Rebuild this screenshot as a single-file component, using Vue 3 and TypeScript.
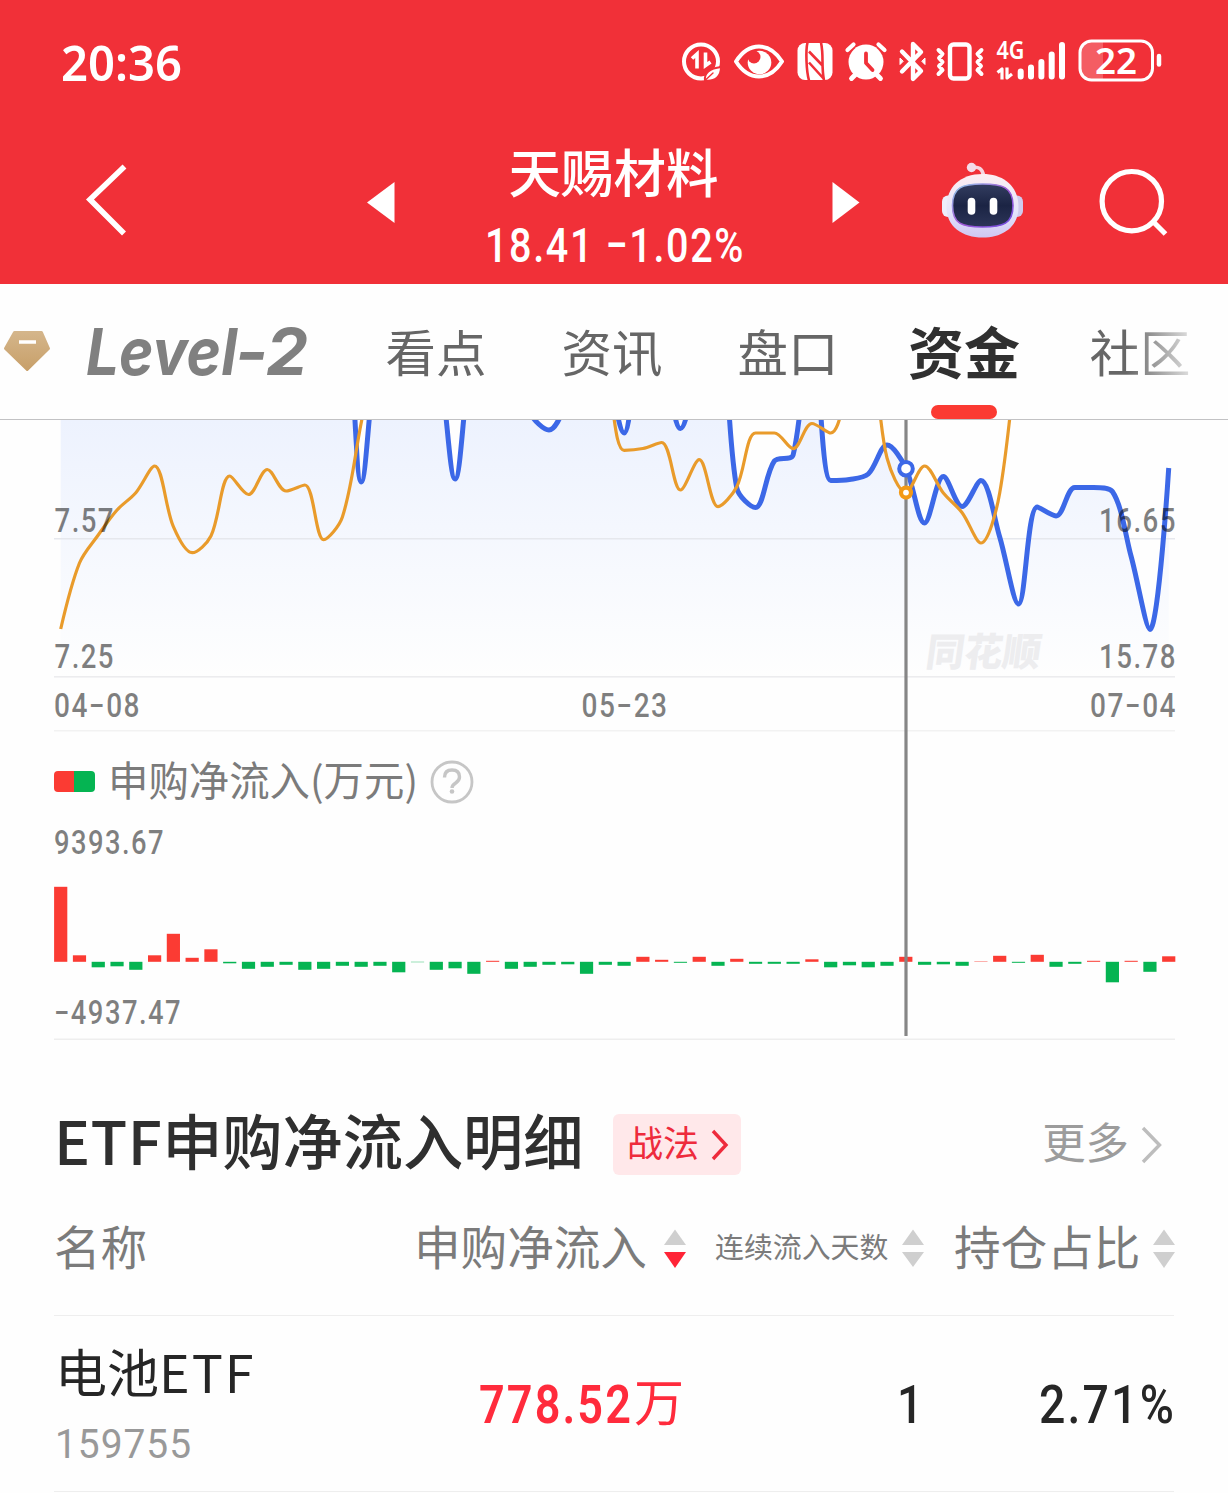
<script setup lang="ts">
import { h } from 'vue'

interface FitProps {
  text: string
  w: number
  size: number
  weight?: number
  family?: string
  track?: number
}

// Single-line text squeezed to an exact advance width, as the condensed numerals need.
const FitText = (p: FitProps) =>
  h('svg', { width: p.w, height: p.size, viewBox: `0 0 ${p.w} ${p.size}`, style: 'display:block;overflow:visible;flex:none' }, [
    h(
      'text',
      {
        x: 0,
        y: p.size * 0.86,
        'font-size': p.size,
        'font-weight': p.weight ?? 500,
        'font-family': p.family ?? 'Roboto, sans-serif',
        'letter-spacing': p.track ?? 0,
        textLength: p.w,
        lengthAdjust: 'spacingAndGlyphs',
        fill: 'currentColor',
      },
      p.text,
    ),
  ])
FitText.props = ['text', 'w', 'size', 'weight', 'family', 'track']

const X0 = 60.7
const STEP = 18.78
type Pt = [number, number]

const clamp = (v: number, a: number, b: number) => Math.max(Math.min(a, b), Math.min(Math.max(a, b), v))

function smoothPath(pts: Pt[], s = 0.33): string {
  const n = pts.length
  const before: Pt[] = []
  const after: Pt[] = []
  for (let i = 0; i < n; i++) {
    const p = pts[i]
    if (i === 0 || i === n - 1) {
      before.push(p)
      after.push(p)
      continue
    }
    const a = pts[i - 1]
    const b = pts[i + 1]
    const d0 = Math.hypot(p[0] - a[0], p[1] - a[1])
    const d1 = Math.hypot(b[0] - p[0], b[1] - p[1])
    const r = d1 / (d0 + d1)
    const vx = b[0] - a[0]
    const vy = b[1] - a[1]
    let nx = clamp(p[0] + vx * s * r, p[0], b[0])
    let ny = clamp(p[1] + vy * s * r, p[1], b[1])
    const bx = clamp(p[0] - ((nx - p[0]) * d0) / d1, a[0], p[0])
    const by = clamp(p[1] - ((ny - p[1]) * d0) / d1, a[1], p[1])
    nx = p[0] + ((p[0] - bx) * d1) / d0
    ny = p[1] + ((p[1] - by) * d1) / d0
    before.push([bx, by])
    after.push([nx, ny])
  }
  let d = `M${pts[0][0]} ${pts[0][1]}`
  for (let i = 1; i < n; i++) {
    d += `C${after[i - 1].join(' ')} ${before[i].join(' ')} ${pts[i].join(' ')}`
  }
  return d
}

const toPts = (ys: number[]): Pt[] => ys.map((y, i) => [+(X0 + i * STEP).toFixed(2), y])

const orangeYs = [
  629, 563, 535, 510, 492.7, 466, 526.7, 552.7, 536, 476, 494.5, 469.5, 491, 485, 539.6, 517, 423, 330, 300, 290, 280, 290,
  300, 310, 290, 300, 310, 320, 340, 370, 450.3, 448.5, 442.5, 490, 459.7, 506.7, 486.7, 433, 433, 448.7, 423.5, 433, 385, 350,
  458, 492.5, 466, 493, 512.7, 543, 493, 330,
]
const blueYs = [
  300, 290, 300, 280, 300, 320, 300, 290, 300, 310, 300, 300, 300, 310, 300, 300, 482, 335, 320, 330, 350, 479, 345, 330, 350,
  413, 430, 400, 350, 370, 433, 345, 365, 428.5, 360, 310, 488, 507.5, 461, 455, 310, 480.5, 479.5, 474, 445, 468, 523, 476.5,
  506.5, 480.5, 537, 604, 507, 516, 487.5, 487.5, 491.5, 556.5, 629.5, 468,
]
const orangePath = smoothPath(toPts(orangeYs))
const bluePath = smoothPath(toPts(blueYs))
const areaPath = `${bluePath}L1168.7 677L60.7 677Z`

const bars = [
  75, 6.5, -5.5, -4.5, -8, 6.5, 28, 4, 12.5, -1.5, -7, -5, -3, -8, -7, -4, -5, -4, -10.5, -0.4, -8, -6.5, -12, 1, -7, -5, -3,
  -2.5, -12, -3, -4, 5, 2, -1, 5, -4, 3, -2, -2, -2, 2.5, -5.5, -3.5, -5.5, -4, 5, -3, -2.5, -4, 0.4, 6, -1, 7, -5, -2, 1,
  -20.5, 1, -10, 5.5,
]

const tabs = ['看点', '资讯', '盘口']
</script>

<template>
  <div class="page">
    <header class="top">
      <div class="status">
        <FitText class="time" text="20:36" :w="121" :size="49" :weight="600" family="'Noto Sans', sans-serif" />
        <svg class="icons" width="486" height="60" viewBox="680 28 486 60" fill="none" stroke="#fff" stroke-linecap="round" stroke-linejoin="round">
          <!-- data saver -->
          <circle cx="701" cy="61.500" r="17" stroke-width="4" />
          <path d="M692 58.500l5-4.500V68.500M705.500 52.500V65.500l5-3.500" stroke-width="3.600" stroke-linejoin="miter" stroke-linecap="butt" />
          <path d="M705 80.500c-1-7.500 4.500-12 16-13.500 0 9.500-5.500 14.500-16 13.500z" fill="#fff" stroke="#f13038" stroke-width="2" />
          <path d="M706 79.500l7-6.500" stroke="#f13038" stroke-width="1.400" />
          <!-- eye -->
          <path d="M736 61.500c6-9.500 14-15 23-15s17 5.500 23 15c-6 9.500-14 15-23 15s-17-5.500-23-15z" stroke-width="4" />
          <circle cx="759.500" cy="62.500" r="11.800" fill="#fff" stroke="none" />
          <circle cx="754" cy="57" r="6.500" fill="#f13038" stroke="none" />
          <!-- nfc -->
          <rect x="797.500" y="43" width="35" height="37" rx="7.500" fill="#fff" stroke="none" />
          <path d="M807.500 42.500q-1.500 6-1 18.500t2.500 19.500M821 42.500q1.500 7 1.500 18.500t1.500 19.500M809 51.500l13.500 14M809 62.500l14.500 16" stroke="#f13038" stroke-width="2.600" stroke-linecap="butt" />
          <!-- alarm -->
          <circle cx="866" cy="62" r="17.500" fill="#fff" stroke="none" />
          <path d="M847.500 50l6-5.500M884.500 50l-6-5.500" stroke-width="4.200" />
          <path d="M855 75l-3.500 3.500M877 75l3.500 3.500" stroke-width="4.800" />
          <path d="M866 53.500v9.500l6.500 7" stroke="#f13038" stroke-width="3.800" />
          <!-- bluetooth -->
          <path d="M902 51.500l19 19.500-8 8V44l8 8-19 19.500" stroke-width="4.400" />
          <path d="M900 58.500v6l3-3zM925 58.500v6l-3-3z" fill="#fff" stroke-width="1" />
          <!-- vibrate -->
          <rect x="950" y="44.500" width="19.500" height="34" rx="3.500" stroke-width="4.400" />
          <path d="M938.500 50l4 4-3.500 4 3.500 4-3.500 4 3.500 4-4 4M981.500 50l-4 4 3.500 4-3.500 4 3.500 4-3.500 4 4 4" stroke-width="4" />
          <!-- signal -->
          <text x="996.500" y="59.300" font-family="'Noto Sans', sans-serif" font-weight="600" font-size="24.500" textLength="28" lengthAdjust="spacingAndGlyphs" fill="#fff" stroke="none">4G</text>
          <path d="M997.500 72.500l4.500-3.500v10.500M1007 67.500v10.500l5-4" stroke-width="3.200" stroke-linecap="butt" />
          <path d="M1020.700 71.500v5M1031 67.500v9M1041.400 62v14.500M1051.700 54.500v22M1062 45v31.500" stroke-width="6" />
          <!-- battery -->
          <path d="M1103 41.500v38h-12q-10.500 0-10.500-10.500v-17q0-10.500 10.500-10.500z" fill="#fff" fill-opacity="0.220" stroke="none" />
          <rect x="1080" y="41" width="72.500" height="39" rx="11.500" stroke-width="3" />
          <text x="1095" y="74" font-family="'Noto Sans', sans-serif" font-weight="600" font-size="36" textLength="42" lengthAdjust="spacingAndGlyphs" fill="#fff" stroke="none">22</text>
          <path d="M1159 56v8.500" stroke-width="4.500" />
        </svg>
      </div>
      <nav class="nav">
        <svg class="back" width="44" height="74" viewBox="0 0 44 74"><path d="M40.500 3.500L6 36.500l34 34" fill="none" stroke="#fff" stroke-width="5.600" /></svg>
        <svg class="prev" width="28" height="42" viewBox="0 0 28 42"><path d="M0 20.500L27.500 0v41z" fill="#fff" /></svg>
        <div class="stock">
          <div class="name">天赐材料</div>
          <FitText text="18.41 −1.02%" :w="260" :size="48.5" :weight="500" :track="2" />
        </div>
        <svg class="next" width="28" height="42" viewBox="0 0 28 42"><path d="M27.500 20.500L0.500 0v41z" fill="#fff" /></svg>
        <svg class="robot" width="84" height="78" viewBox="941 161 84 78">
          <defs>
            <linearGradient id="head" x1="0" y1="0" x2="0" y2="1">
              <stop offset="0" stop-color="#fdeef2" />
              <stop offset="0.600" stop-color="#e4e4fb" />
              <stop offset="1" stop-color="#cfc6f2" />
            </linearGradient>
            <linearGradient id="rim" x1="0" y1="0" x2="1" y2="1">
              <stop offset="0" stop-color="#8fd0ea" />
              <stop offset="0.500" stop-color="#a45ad6" />
              <stop offset="1" stop-color="#6d4be0" />
            </linearGradient>
            <linearGradient id="visor" x1="0" y1="0" x2="0" y2="1">
              <stop offset="0" stop-color="#333d60" />
              <stop offset="0.500" stop-color="#1b2444" />
              <stop offset="1" stop-color="#2c3558" />
            </linearGradient>
          </defs>
          <path d="M972 167.500q10-2 11.500 8" fill="none" stroke="#f7d5e0" stroke-width="3.500" />
          <circle cx="971.500" cy="167.500" r="4.700" fill="#f4dcea" />
          <rect x="942" y="195.500" width="14" height="21.500" rx="6" fill="#eeedfb" />
          <rect x="1009" y="195.500" width="14" height="21.500" rx="6" fill="#cfcbee" />
          <path d="M982.500 174c22 0 36 13 36 33s-16 30.500-36 30.500-36-10.500-36-30.500 14-33 36-33z" fill="url(#head)" />
          <path d="M982.500 184c20 0 30.500 3 30.500 21.500s-10 21.500-30.500 21.500-30-3-30-21.500 10-21.500 30-21.500z" fill="url(#visor)" stroke="url(#rim)" stroke-width="1.600" />
          <rect x="967.700" y="197.700" width="7.600" height="17" rx="3.800" fill="#fff" />
          <rect x="989.700" y="197.700" width="7.600" height="17" rx="3.800" fill="#fff" />
        </svg>
        <svg class="search" width="72" height="72" viewBox="1098 167 72 72" fill="none" stroke="#fff" stroke-width="5.200">
          <circle cx="1131.800" cy="201.200" r="29.700" />
          <path d="M1153 221.500l12.500 12.500" />
        </svg>
      </nav>
    </header>

    <div class="tabs">
      <svg class="gem" width="56" height="56" viewBox="0 0 56 56">
        <defs><linearGradient id="gold" x1="0" y1="0" x2="0" y2="1"><stop offset="0" stop-color="#d4b58a" /><stop offset="1" stop-color="#c8a06a" /></linearGradient></defs>
        <path d="M14.500 9.500h27l7 16L27.200 46.500 5.500 25.500z" fill="url(#gold)" stroke="url(#gold)" stroke-width="3" stroke-linejoin="round" />
        <path d="M19 19h17" stroke="#fff" stroke-width="3.500" />
      </svg>
      <svg class="level" width="224" height="80" viewBox="0 0 224 80">
        <text y="61" font-size="65">
          <tspan x="2" textLength="151" lengthAdjust="spacingAndGlyphs">Level</tspan><tspan x="151" textLength="33" lengthAdjust="spacingAndGlyphs">-</tspan><tspan x="182" textLength="42" lengthAdjust="spacingAndGlyphs">2</tspan>
        </text>
      </svg>
      <span v-for="t in tabs" :key="t" class="tab">{{ t }}</span>
      <span class="tab active">资金<i class="mark"></i></span>
      <span class="tab fade">社区</span>
    </div>

    <section class="charts">
      <svg class="trend" width="1228" height="312" viewBox="0 420 1228 312">
        <defs>
          <linearGradient id="area" gradientUnits="userSpaceOnUse" x1="0" y1="420" x2="0" y2="677">
            <stop offset="0" stop-color="#edf2fe" />
            <stop offset="1" stop-color="#fefefe" />
          </linearGradient>
        </defs>
        <path :d="areaPath" fill="url(#area)" />
        <g fill="#ececee">
          <rect x="54" y="538" width="1121" height="1.500" fill="#e6e8ed" />
          <rect x="54" y="676" width="1121" height="1.600" />
          <rect x="54" y="730" width="1121" height="1.500" fill="#f2f2f2" />
        </g>
        <text x="1018" y="666" transform="skewX(-8)" font-size="39" class="mark-text" textLength="115" lengthAdjust="spacingAndGlyphs">同花顺</text>
        <path :d="bluePath" fill="none" stroke="#3c68e7" stroke-width="5" />
        <path :d="orangePath" fill="none" stroke="#e99b2b" stroke-width="3.200" />
        <g class="axis">
          <text x="54.500" y="532" textLength="60.500" lengthAdjust="spacingAndGlyphs">7.57</text>
          <text x="54.500" y="668" textLength="60.500" lengthAdjust="spacingAndGlyphs">7.25</text>
          <text x="1099" y="532" textLength="78" lengthAdjust="spacingAndGlyphs">16.65</text>
          <text x="1099" y="668" textLength="78" lengthAdjust="spacingAndGlyphs">15.78</text>
          <text x="54" y="717" textLength="87" lengthAdjust="spacingAndGlyphs">04−08</text>
          <text x="581.500" y="717" textLength="87" lengthAdjust="spacingAndGlyphs">05−23</text>
          <text x="1090" y="717" textLength="87" lengthAdjust="spacingAndGlyphs">07−04</text>
        </g>
      </svg>
      <div class="legend">
        <i class="swatch"></i>
        <span>申购净流入(万元)</span>
        <svg width="44" height="44" viewBox="0 0 44 44" fill="none" stroke="#c6c6c6">
          <circle cx="22" cy="22" r="20" stroke-width="2.800" />
          <path d="M14.500 17.500q0-7.500 7.500-7.500t7.500 7q0 3.500-3.800 6-3.700 2.400-3.700 5" stroke-width="3.400" />
          <circle cx="22" cy="31.500" r="2.300" fill="#c6c6c6" stroke="none" />
        </svg>
      </div>
      <svg class="flow" width="1228" height="215" viewBox="0 825 1228 215">
        <g class="axis">
          <text x="54" y="853.500" textLength="111" lengthAdjust="spacingAndGlyphs">9393.67</text>
          <text x="54" y="1023.500" textLength="128" lengthAdjust="spacingAndGlyphs">−4937.47</text>
        </g>
        <rect
          v-for="(b, i) in bars"
          :key="i"
          :x="X0 + i * STEP - 6.6"
          :y="b > 0 ? 961.8 - b : 961.8"
          width="13.2"
          :height="Math.abs(b)"
          :fill="b > 0 ? '#fb3b33' : '#05b452'"
        />
        <rect x="54" y="1038.500" width="1121" height="1.500" fill="#eeeeee" />
      </svg>
      <svg class="cursor" width="20" height="616" viewBox="896 420 20 616">
        <path d="M906 420v616" stroke="#868686" stroke-width="3.200" />
        <circle cx="906" cy="468.700" r="6.800" fill="#fff" stroke="#3c68e7" stroke-width="4" />
        <circle cx="906" cy="492.600" r="5" fill="#fff" stroke="#f39a16" stroke-width="4.200" />
      </svg>
    </section>

    <section class="detail">
      <div class="head">
        <h2><span class="etf">ETF</span>申购净流入明细</h2>
        <span class="badge"><b>战法</b><svg width="18" height="32" viewBox="0 0 18 32"><path d="M2 2l13 14L2 30" fill="none" stroke="#ee2b3c" stroke-width="3.400" /></svg></span>
        <span class="more"><b>更多</b><svg width="22" height="38" viewBox="0 0 22 38"><path d="M2 2l16.500 17L2 36" fill="none" stroke="#bdbdbd" stroke-width="3.400" /></svg></span>
      </div>
      <div class="cols">
        <span class="c-name">名称</span>
        <span class="c-flow">申购净流入</span>
        <svg class="sort" width="22" height="40" viewBox="0 0 22 40"><path d="M11 0.500L22 16H0z" fill="#cfcfcf" /><path d="M11 39L0 23h22z" fill="#ff2436" /></svg>
        <span class="c-days">连续流入天数</span>
        <svg class="sort" width="22" height="40" viewBox="0 0 22 40"><path d="M11 0.500L22 16H0zM11 38L0 23h22z" fill="#cfcfcf" /></svg>
        <span class="c-share">持仓占比</span>
        <svg class="sort" width="22" height="40" viewBox="0 0 22 40"><path d="M11 0.500L22 16H0zM11 39L0 23h22z" fill="#cfcfcf" /></svg>
      </div>
      <div class="row">
        <div class="fund">
          <div class="fund-name">电池<span class="etf">ETF</span></div>
          <FitText class="code" text="159755" :w="137" :size="41" :weight="400" :track="1" />
        </div>
        <div class="amount"><FitText text="778.52" :w="154" :size="54" :weight="600" :track="2.5" /><span>万</span></div>
        <FitText class="days" text="1" :w="26" :size="54" :weight="500" />
        <FitText class="share" text="2.71%" :w="137" :size="54" :weight="500" :track="2.5" />
      </div>
    </section>
  </div>
</template>

<style>
body {
  margin: 0;
  background: #fff;
}
</style>

<style scoped>
.page {
  width: 1228px;
  height: 1493px;
  overflow: hidden;
  background: #fefefe;
  font-family: 'Noto Sans CJK SC', sans-serif;
}
.top {
  height: 284px;
  background: #f13038;
  color: #fff;
}
.status {
  height: 125px;
  display: flex;
  align-items: flex-start;
}
.time {
  margin: 38.5px 0 0 61px;
}
.icons {
  margin: 28px 0 0 498px;
}
.nav {
  height: 159px;
  display: flex;
  align-items: flex-start;
}
.nav > * {
  flex: none;
}
.back {
  margin: 38px 0 0 84px;
}
.prev {
  margin: 57px 0 0 239px;
}
.stock {
  width: 437px;
  display: flex;
  flex-direction: column;
  align-items: center;
}
.name {
  height: 95px;
  line-height: 90px;
  font-size: 52.5px;
  font-weight: 500;
}
.stock > svg {
  margin-left: 3px;
}
.next {
  margin: 57px 0 0 0;
}
.robot {
  margin: 36px 0 0 81px;
}
.search {
  margin: 42px 0 0 73px;
}
.tabs {
  height: 135px;
  display: flex;
  align-items: flex-start;
  border-bottom: 1px solid #c2c2c4;
  background: #fefefe;
}
.gem {
  margin: 39px 0 0 0;
  flex: none;
}
.level {
  margin: 30px 50px 0 28px;
  flex: none;
  overflow: visible;
}
.level text {
  font-family: Inter, 'DejaVu Sans', sans-serif;
  font-weight: 700;
  font-style: italic;
  fill: #808080;
}
.tab {
  width: 176px;
  flex: none;
  text-align: center;
  font-size: 50.5px;
  line-height: 132px;
  height: 135px;
  color: #666;
}
.level + .tab {
  margin-left: -10px;
}
.active {
  position: relative;
  font-size: 56px;
  font-weight: 700;
  color: #303030;
}
.mark {
  position: absolute;
  left: 55px;
  bottom: 0;
  width: 66px;
  height: 14px;
  border-radius: 7px;
  background: #fb3a32;
}
.fade {
  color: transparent;
  background: linear-gradient(90deg, #666 42%, #999 58%, #dcdcdc 78%);
  background-clip: text;
  -webkit-background-clip: text;
}
.charts {
  position: relative;
  height: 620px;
}
.charts > svg {
  display: block;
}
.axis {
  font-family: Roboto, sans-serif;
  font-size: 32.5px;
  font-weight: 500;
  letter-spacing: 1.7px;
  fill: #000;
  fill-opacity: 0.51;
}
.mark-text {
  font-family: 'Noto Sans CJK SC', sans-serif;
  font-weight: 900;
  fill: #ededef;
}
.legend {
  height: 93px;
  display: flex;
  align-items: center;
  padding-left: 54px;
  box-sizing: border-box;
  padding-top: 7px;
  font-size: 40.4px;
  color: #7b7b7b;
}
.legend span {
  line-height: 48px;
  height: 54px;
  margin: 0 12px 0 13px;
}
.swatch {
  width: 41px;
  height: 21px;
  margin-top: -1px;
  border-radius: 4px;
  background: linear-gradient(90deg, #fb3b33 48%, #05b452 48%);
}
.cursor {
  position: absolute;
  left: 896px;
  top: 0;
}
.detail {
  padding: 0 54px;
}
.head {
  height: 145px;
  display: flex;
  align-items: flex-start;
}
h2 {
  margin: 56px 0 0 0;
  width: 559px;
  font-size: 60.2px;
  line-height: 86px;
  font-weight: 500;
  color: #2f2f2f;
  white-space: nowrap;
}
h2 .etf {
  letter-spacing: 0.4px;
}
.badge {
  margin: 74px 0 0 0;
  width: 128px;
  height: 61px;
  box-sizing: border-box;
  padding-left: 14px;
  border-radius: 6px;
  background: #ffe8ea;
  color: #ee2b3c;
  font-size: 36px;
  display: flex;
  align-items: center;
  gap: 12px;
}
.head b {
  font-weight: 400;
  line-height: 55px;
  height: 61px;
}
.head .more {
  margin: 74px 11px 0 auto;
  height: 61px;
  display: flex;
  align-items: center;
  gap: 12px;
  font-size: 43.4px;
  color: #9c9c9c;
}
.head .more b {
  line-height: 53px;
}
.cols {
  height: 130px;
  display: flex;
  align-items: flex-start;
  border-bottom: 1.5px solid #eee;
  color: #7b7b7b;
  font-size: 46.6px;
  line-height: 120px;
  white-space: nowrap;
}
.cols > * {
  flex: none;
}
.c-name {
  width: 360px;
}
.c-flow {
  width: 250px;
}
.c-days {
  width: 187px;
  padding-left: 29px;
  font-size: 28.9px;
}
.c-share {
  width: 199px;
  padding-left: 30px;
}
.sort {
  margin-top: 44px;
}
.row {
  height: 175px;
  display: flex;
  align-items: flex-start;
  border-bottom: 1.5px solid #eee;
  color: #262626;
}
.fund {
  width: 425px;
}
.fund-name {
  margin: 17px 0 0 1px;
  height: 90px;
  line-height: 76px;
  font-size: 52px;
}
.fund-name .etf {
  letter-spacing: 2px;
}
.code {
  color: #999;
  margin-left: 1px;
}
.amount {
  width: 209px;
  display: flex;
  align-items: flex-start;
  color: #ff2b3c;
  margin-top: 61px;
}
.amount span {
  font-size: 50px;
  line-height: 54px;
  margin: -5px 0 0 1px;
}
.days {
  margin: 61px 0 0 209px;
}
.share {
  margin: 61px -2px 0 auto;
}
</style>
